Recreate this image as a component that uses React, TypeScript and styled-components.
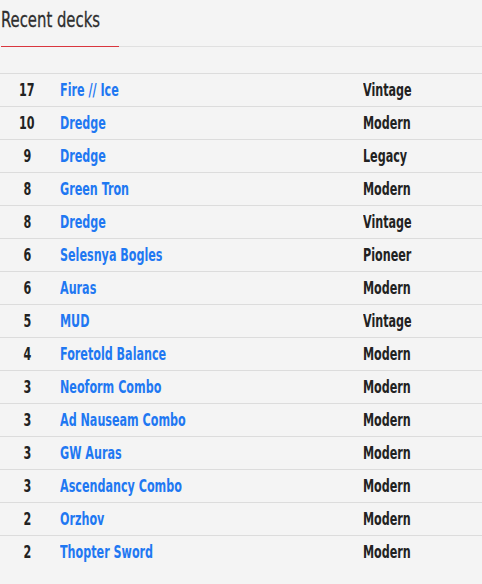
import React from "react";
import styled, { createGlobalStyle } from "styled-components";

const Global = createGlobalStyle`
  html, body { margin: 0; padding: 0; background: #f4f4f4; }
  body { font-family: "DejaVu Sans Condensed", "DejaVu Sans", sans-serif; }
`;

const Page = styled.div`
  width: 482px;
  display: flex;
  flex-direction: column;
`;

const HeadingBar = styled.div`
  height: 47px;
  display: flex;
  flex-direction: column;
  justify-content: space-between;
`;

const Heading = styled.h2`
  margin: 6px 0 0 1px;
  font-size: 22px;
  font-weight: 400;
  color: #2e2e2e;
  line-height: 28px;
  -webkit-text-stroke: 0.3px #2e2e2e;
`;

const Squeeze = styled.span<{ $origin?: string; $scale?: number }>`
  display: inline-block;
  white-space: nowrap;
  transform: scaleX(${(p) => p.$scale ?? 0.78});
  transform-origin: ${(p) => p.$origin ?? "left"} center;
`;

const Rule = styled.div`
  display: flex;
  height: 1px;
`;

const Accent = styled.div`
  width: 118px;
  margin-left: 1px;
  background: #d9363e;
`;

const Gray = styled.div`
  flex: 1;
  background: #e0e0e0;
`;

const Table = styled.div`
  margin-top: 26px;
  display: flex;
  flex-direction: column;
`;

const Row = styled.div`
  height: 33px;
  box-sizing: border-box;
  border-top: 1px solid #dcdcdc;
  display: grid;
  grid-template-columns: 54px 309px 1fr;
  align-items: center;
  font-size: 17px;
  font-weight: 700;
  line-height: 20px;
`;

const Count = styled.div`
  text-align: center;
  color: #222;
`;

const Name = styled.a`
  padding-left: 6px;
  color: #1f78f2;
  text-decoration: none;
`;

const Format = styled.div`
  color: #222;
`;

const decks: [number, string, string][] = [
  [17, "Fire // Ice", "Vintage"],
  [10, "Dredge", "Modern"],
  [9, "Dredge", "Legacy"],
  [8, "Green Tron", "Modern"],
  [8, "Dredge", "Vintage"],
  [6, "Selesnya Bogles", "Pioneer"],
  [6, "Auras", "Modern"],
  [5, "MUD", "Vintage"],
  [4, "Foretold Balance", "Modern"],
  [3, "Neoform Combo", "Modern"],
  [3, "Ad Nauseam Combo", "Modern"],
  [3, "GW Auras", "Modern"],
  [3, "Ascendancy Combo", "Modern"],
  [2, "Orzhov", "Modern"],
  [2, "Thopter Sword", "Modern"],
];

export default function App() {
  return (
    <Page>
      <Global />
      <HeadingBar>
        <Heading>
          <Squeeze $scale={0.75}>Recent decks</Squeeze>
        </Heading>
        <Rule>
          <Accent />
          <Gray />
        </Rule>
      </HeadingBar>
      <Table>
        {decks.map(([n, name, fmt], i) => (
          <Row key={i}>
            <Count>
              <Squeeze $origin="center" $scale={0.73}>{n}</Squeeze>
            </Count>
            <Name href="#">
              <Squeeze $scale={0.73}>{name}</Squeeze>
            </Name>
            <Format>
              <Squeeze $scale={0.73}>{fmt}</Squeeze>
            </Format>
          </Row>
        ))}
      </Table>
    </Page>
  );
}
